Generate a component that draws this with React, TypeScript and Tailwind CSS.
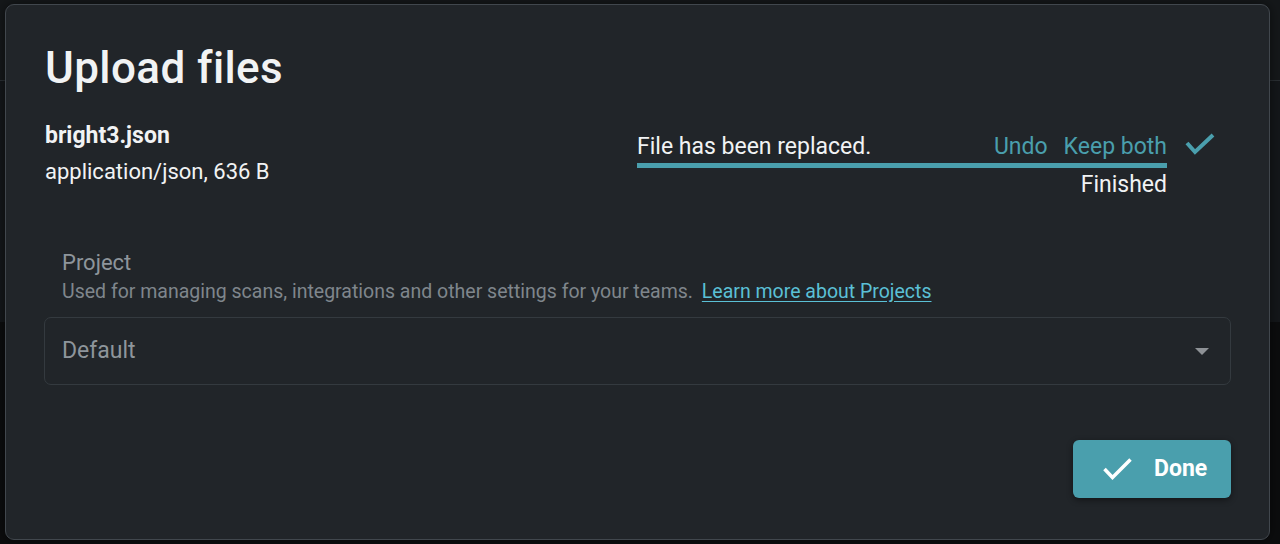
function Backdrop() {
  return (
    <div className="flex h-[544px] w-[1280px] flex-col bg-[#0d0f10]">
      <div className="h-[81px] border-b border-[#2a2f33] bg-[#15181a]" />
      <div className="h-[241px] bg-[#14171a]" />
      <div className="flex-1 bg-[#0c0d0e]" />
    </div>
  );
}

function App() {
  return (
    <div className="relative h-[544px] w-[1280px] overflow-hidden font-['Roboto',sans-serif]">
      <Backdrop />

      {/* dialog */}
      <div className="absolute left-[5px] top-[4px] flex h-[536px] w-[1265px] flex-col rounded-[9px] border border-[#41474d] bg-[#212529] px-[38px] pt-[37px] text-[#f1f3f4] shadow-[0_0_12px_rgba(0,0,0,0.5)]">
        <h1 className="pl-[1px] text-[44px] font-medium leading-[52px] tracking-[0.4px]">Upload files</h1>

        <div className="mt-[28px] flex items-start justify-between">
          <div className="pl-[1px]">
            <div className="text-[23px] font-bold leading-[28px]">bright3.json</div>
            <div className="mt-[8px] text-[22px] leading-[28px]">application/json, 636 B</div>
          </div>

          <div className="mr-[16px] flex items-start">
            <div className="mt-[12px] flex w-[530px] flex-col">
              <div className="flex items-baseline justify-between text-[23px] leading-[26px]">
                <span>File has been replaced.</span>
                <span className="flex gap-[16px] text-[#4a9fad]">
                  <span>Undo</span>
                  <span>Keep both</span>
                </span>
              </div>
              <div className="mt-[3px] h-[5px] bg-[#4a9fad]" />
              <div className="mt-[4px] text-right text-[23px] leading-[26px]">Finished</div>
            </div>
            <svg className="ml-[18px] mt-[11px]" width="30" height="24" viewBox="0 0 30 24" fill="none">
              <path d="M2 10 L10 19 L28 2" stroke="#4a9fad" strokeWidth="4" />
            </svg>
          </div>
        </div>

        <div className="mt-[52px] pl-[18px]">
          <div className="text-[22px] leading-[26px] text-[#8e959b]">Project</div>
          <div className="mt-[4px] text-[19.5px] leading-[24px] text-[#7f868c]">
            Used for managing scans, integrations and other settings for your teams.{' '}
            <span className="ml-[4px] text-[#5bc0d6] underline underline-offset-[3px]">Learn more about Projects</span>
          </div>
        </div>

        <div className="mt-[13px] flex h-[68px] items-center justify-between rounded-[7px] border border-[#343a3f] pl-[17px] pr-[21px]">
          <span className="text-[23px] text-[#8e959b]">Default</span>
          <svg width="14" height="7" viewBox="0 0 14 7">
            <path d="M0 0 L14 0 L7 7 Z" fill="#8e9296" />
          </svg>
        </div>

        <div className="mt-[55px] flex justify-end">
          <button className="flex h-[58px] w-[158px] items-center gap-[22px] rounded-[6px] bg-[#4a9fad] pl-[30px] text-[23px] font-bold text-white shadow-[0_2px_6px_rgba(0,0,0,0.45)]">
            <svg width="29" height="22" viewBox="0 0 29 22" fill="none">
              <path d="M1.5 11 L9.5 19.5 L27.5 1.5" stroke="#ffffff" strokeWidth="3.5" />
            </svg>
            <span>Done</span>
          </button>
        </div>
      </div>
    </div>
  );
}

export default App;
